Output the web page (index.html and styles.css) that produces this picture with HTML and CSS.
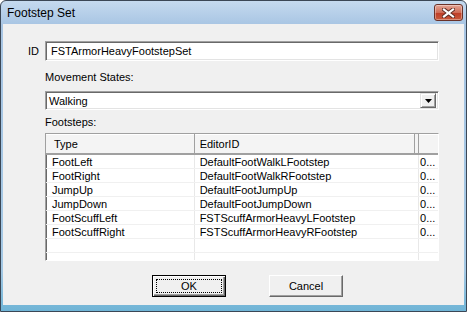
FILE: index.html
```html
<!DOCTYPE html>
<html lang="en">
<head>
    <meta charset="UTF-8">
    <title>Footstep Set</title>
    <link rel="stylesheet" href="styles.css">
</head>
<body>
    <div class="window">
        <div class="titlebar">
            <span class="title">Footstep Set</span>
            <div class="close">
                <svg width="13" height="10" viewBox="0 0 13 10">
                    <path d="M2 1.5 L11 8.5 M11 1.5 L2 8.5" stroke="#5a2a22" stroke-width="4" stroke-linecap="square"/>
                    <path d="M2 1.5 L11 8.5 M11 1.5 L2 8.5" stroke="#fff" stroke-width="2.2" stroke-linecap="square"/>
                </svg>
            </div>
        </div>
        <div class="client">
            <div class="id-row">
                <span class="id-label">ID</span>
                <div class="field">FSTArmorHeavyFootstepSet</div>
            </div>
            <div class="group">
                <div class="label">Movement States:</div>
                <div class="combo">
                    <span class="combo-text">Walking</span>
                    <div class="combo-btn">
                        <svg width="7" height="4" viewBox="0 0 7 4"><path d="M0 0 H7 L3.5 4 Z" fill="#000"/></svg>
                    </div>
                </div>
                <div class="label footsteps">Footsteps:</div>
                <div class="list">
                    <div class="list-head">
                        <div class="hcell c1">Type</div>
                        <div class="hcell c2">EditorID</div>
                        <div class="hcell c3"></div>
                    </div>
                    <div class="row"><div class="cell c1">FootLeft</div><div class="cell c2">DefaultFootWalkLFootstep</div><div class="cell c3">0...</div></div>
                    <div class="row"><div class="cell c1">FootRight</div><div class="cell c2">DefaultFootWalkRFootstep</div><div class="cell c3">0...</div></div>
                    <div class="row"><div class="cell c1">JumpUp</div><div class="cell c2">DefaultFootJumpUp</div><div class="cell c3">0...</div></div>
                    <div class="row"><div class="cell c1">JumpDown</div><div class="cell c2">DefaultFootJumpDown</div><div class="cell c3">0...</div></div>
                    <div class="row"><div class="cell c1">FootScuffLeft</div><div class="cell c2">FSTScuffArmorHeavyLFootstep</div><div class="cell c3">0...</div></div>
                    <div class="row"><div class="cell c1">FootScuffRight</div><div class="cell c2">FSTScuffArmorHeavyRFootstep</div><div class="cell c3">0...</div></div>
                    <div class="row"><div class="cell c1"></div><div class="cell c2"></div><div class="cell c3"></div></div>
                    <div class="row"><div class="cell c1"></div><div class="cell c2"></div><div class="cell c3"></div></div>
                </div>
            </div>
            <div class="buttons">
                <div class="btn default"><span class="focus">OK</span></div>
                <div class="btn">Cancel</div>
            </div>
        </div>
    </div>
</body>
</html>
```

FILE: styles.css
```css
body{
    margin: 0;
    background: #fff;
}
body *{
    font-family: "Liberation Sans", Arial, sans-serif;
    font-size: 11px;
    color: #000;
}
/* window frame */
.window{
    width: 467px;
    height: 312px;
    box-sizing: border-box;
    border: 1px solid #3b4756;
    border-radius: 6px 6px 0 0;
    background: linear-gradient(#c5daef, #a8c5e3 24px, #a4c8e4 270px, #6fb4d6);
    padding: 0 2px 6px 2px;
    display: flex;
    flex-direction: column;
}
.titlebar{
    height: 23px;
    display: flex;
    align-items: center;
}
.title{
    margin-left: 4px;
    font-size: 12px;
}
.close{
    margin-left: auto;
    margin-right: 1px;
    width: 29px;
    height: 17px;
    box-sizing: border-box;
    border: 1px solid #6a3128;
    border-radius: 3px;
    background: linear-gradient(#e4a596, #cf6c57 50%, #bf3e28 55%, #c85a3c);
    box-shadow: inset 0 0 0 1px rgba(255,255,255,0.35);
    display: flex;
    align-items: center;
    justify-content: center;
}
.client{
    flex: 1;
    background: #f0f0f0;
    padding-top: 17px;
}
.id-row{
    display: flex;
    align-items: center;
    padding-left: 25px;
}
.id-label{
    width: 17px;
}
/* sunken edit */
.field, .combo{
    width: 394px;
    box-sizing: border-box;
    background: #fff;
    border-top: 1px solid #a0a0a0;
    border-left: 1px solid #a0a0a0;
    border-right: 1px solid #fff;
    border-bottom: 1px solid #fff;
    box-shadow: inset 1px 1px 0 #696969, inset -1px -1px 0 #e3e3e3;
}
.field{
    height: 20px;
    line-height: 18px;
    padding-left: 5px;
}
.group{
    margin-left: 42px;
    width: 394px;
}
.label{
    margin-top: 10px;
    height: 13px;
    line-height: 13px;
}
.combo{
    margin-top: 7px;
    height: 19px;
    display: flex;
    align-items: center;
    padding: 0 2px 0 3px;
}
.combo-text{
    flex: 1;
}
.combo-btn{
    width: 16px;
    height: 15px;
    box-sizing: border-box;
    background: #f0f0f0;
    border-top: 1px solid #e3e3e3;
    border-left: 1px solid #e3e3e3;
    border-right: 1px solid #696969;
    border-bottom: 1px solid #696969;
    box-shadow: inset 1px 1px 0 #fff, inset -1px -1px 0 #a0a0a0;
    display: flex;
    align-items: center;
    justify-content: center;
}
.label.footsteps{
    margin-top: 6px;
}
/* list view */
.list{
    margin-top: 4px;
    height: 128px;
    box-sizing: border-box;
    overflow: hidden;
    background: #fff;
    border-top: 1px solid #a0a0a0;
    border-left: 1px solid #a0a0a0;
    border-right: 1px solid #fff;
    border-bottom: 1px solid #fff;
    box-shadow: inset 1px 1px 0 #696969;
}
.list-head{
    display: flex;
    height: 21px;
    box-sizing: border-box;
    padding-left: 1px;
    border-bottom: 2px solid #a0a0a0;
    background: #f4f4f4;
    box-shadow: inset 0 1px 0 #fff;
}
.hcell{
    height: 19px;
    line-height: 20px;
    box-sizing: border-box;
    border-right: 1px solid #a0a0a0;
}
.row{
    display: flex;
    height: 14px;
    box-sizing: border-box;
    padding-left: 1px;
    border-bottom: 1px solid #f0f0f0;
}
.cell{
    line-height: 14px;
    box-sizing: border-box;
    border-right: 1px solid #e8e8e8;
    white-space: nowrap;
    overflow: hidden;
}
.c1{
    width: 148px;
    padding-left: 5px;
}
.hcell.c1{
    padding-left: 7px;
}
.c2{
    width: 225px;
    padding-left: 5px;
}
.hcell.c2{
    box-shadow: inset -3px 0 0 #f4f4f4, inset -4px 0 0 #a0a0a0;
}
.c3{
    width: 19px;
    padding-left: 1px;
    border-right: none;
}
.hcell.c3{
    border-right: none;
}
/* buttons */
.buttons{
    display: flex;
    gap: 43px;
    margin-top: 14px;
    padding-left: 149px;
}
.btn{
    width: 74px;
    height: 22px;
    box-sizing: border-box;
    background: #f0f0f0;
    border-top: 1px solid #fff;
    border-left: 1px solid #fff;
    border-right: 1px solid #696969;
    border-bottom: 1px solid #696969;
    box-shadow: inset -1px -1px 0 #a0a0a0;
    display: flex;
    align-items: center;
    justify-content: center;
}
.btn.default{
    border: 1px solid #000;
    box-shadow: inset 1px 1px 0 #fff, inset -1px -1px 0 #696969, inset -2px -2px 0 #a0a0a0;
    padding: 3px;
}
.focus{
    flex: 1;
    align-self: stretch;
    border: 1px dotted #000;
    display: flex;
    align-items: center;
    justify-content: center;
}
```
